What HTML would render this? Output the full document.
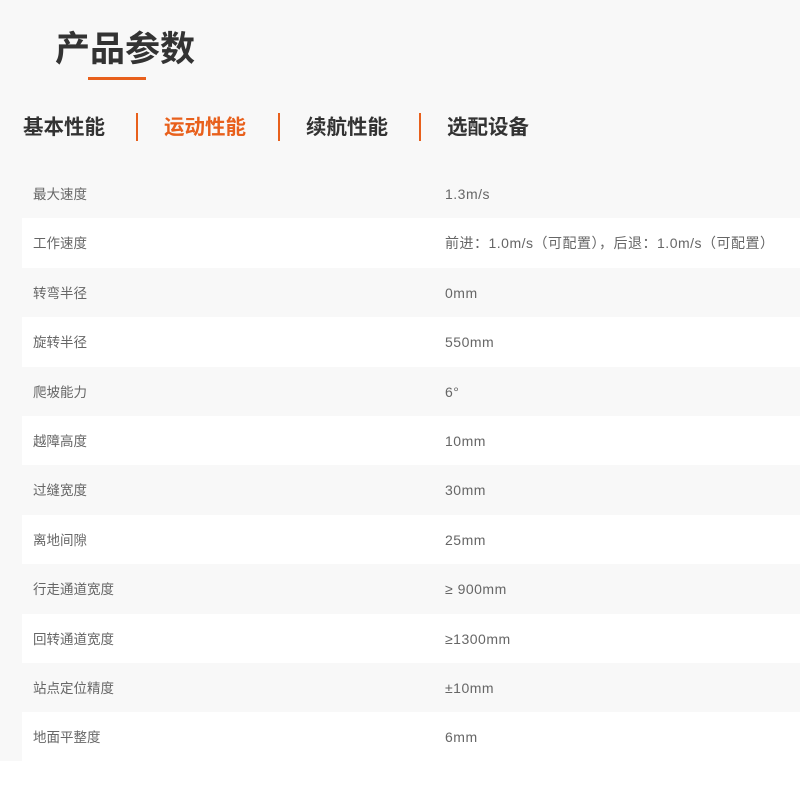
<!DOCTYPE html>
<html><head><meta charset="utf-8"><style>
body{margin:0;width:800px;height:800px;background:#fff;position:relative;font-family:"Liberation Sans","Noto Sans CJK SC",sans-serif;overflow:hidden}
.bg{position:absolute;left:0;top:0;width:800px;height:761px;background:#f8f8f8}
.t{position:absolute;left:55px;top:26px;font-size:35px;font-weight:bold;color:#333;line-height:48px}
.ul{position:absolute;left:88px;top:77px;width:58px;height:3px;background:#e8601c}
.tab{position:absolute;top:114px;font-size:20.5px;font-weight:bold;color:#333;line-height:28px}
.sep{position:absolute;top:113px;width:2px;height:28px;background:#e8601c}
.row{position:absolute;left:22px;width:778px;height:49.4px;font-size:13.5px;color:#666;line-height:51px}
.row span{position:absolute}
.row .a{left:11px}.row .b{left:423px;font-size:14px;letter-spacing:0.5px}
.w{background:#fff}
</style></head><body>
<div class="bg"></div>
<div class="t">产品参数</div>
<div class="ul"></div>
<div class="tab" style="left:23px">基本性能</div>
<div class="sep" style="left:136px"></div>
<div class="tab" style="left:164px;color:#e8601c">运动性能</div>
<div class="sep" style="left:278px"></div>
<div class="tab" style="left:306px">续航性能</div>
<div class="sep" style="left:419px"></div>
<div class="tab" style="left:447px">选配设备</div>

<div class="row" style="top:169px"><span class="a">最大速度</span><span class="b">1.3m/s</span></div>
<div class="row w" style="top:218.4px"><span class="a">工作速度</span><span class="b">前进：1.0m/s（可配置），后退：1.0m/s（可配置）</span></div>
<div class="row" style="top:267.8px"><span class="a">转弯半径</span><span class="b">0mm</span></div>
<div class="row w" style="top:317.2px"><span class="a">旋转半径</span><span class="b">550mm</span></div>
<div class="row" style="top:366.6px"><span class="a">爬坡能力</span><span class="b">6°</span></div>
<div class="row w" style="top:416px"><span class="a">越障高度</span><span class="b">10mm</span></div>
<div class="row" style="top:465.4px"><span class="a">过缝宽度</span><span class="b">30mm</span></div>
<div class="row w" style="top:514.8px"><span class="a">离地间隙</span><span class="b">25mm</span></div>
<div class="row" style="top:564.2px"><span class="a">行走通道宽度</span><span class="b">≥ 900mm</span></div>
<div class="row w" style="top:613.6px"><span class="a">回转通道宽度</span><span class="b">≥1300mm</span></div>
<div class="row" style="top:663px"><span class="a">站点定位精度</span><span class="b">±10mm</span></div>
<div class="row w" style="top:712.4px"><span class="a">地面平整度</span><span class="b">6mm</span></div>
</body></html>
